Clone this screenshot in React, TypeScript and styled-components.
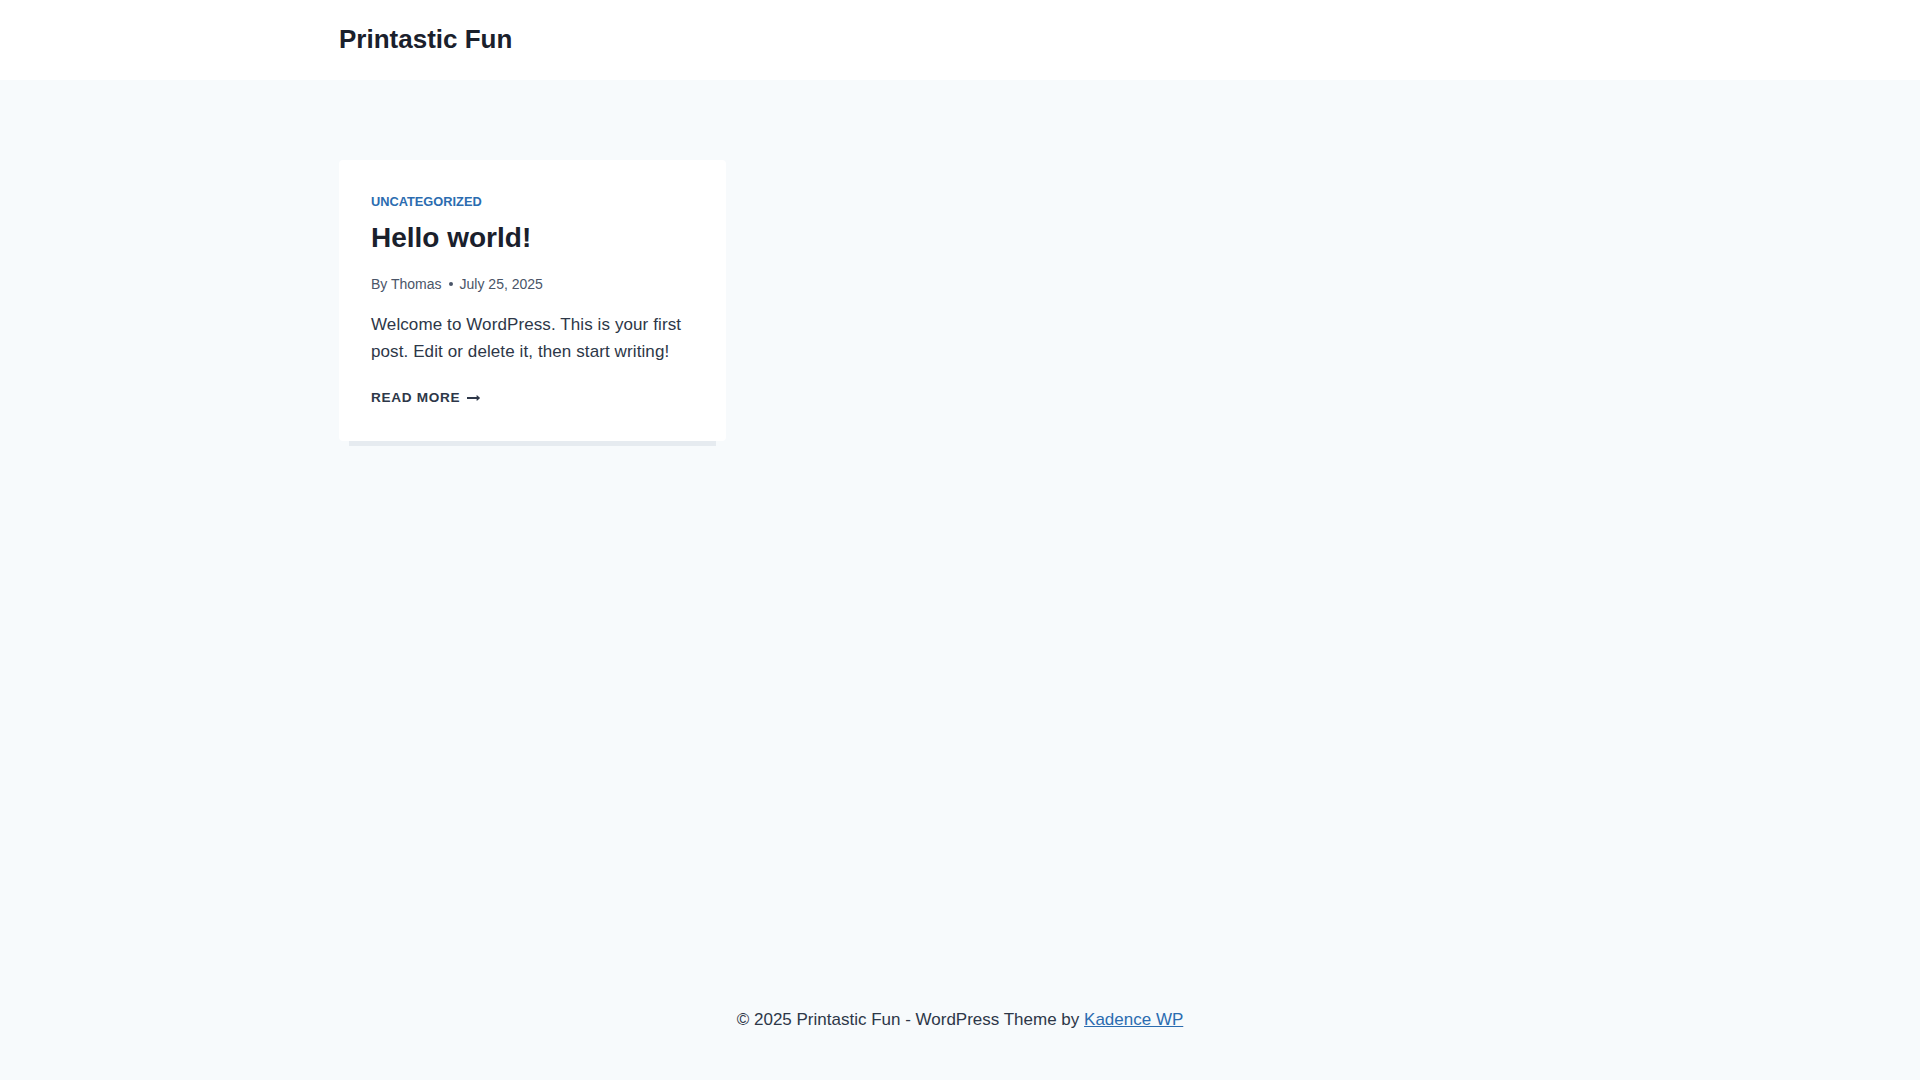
import React, { FC } from "react";
import styled, { createGlobalStyle } from "styled-components";

const GlobalStyle = createGlobalStyle`
  html, body {
    margin: 0;
    padding: 0;
  }
  body {
    background: #f7fafc;
    color: #2d3748;
    font-family: "Liberation Sans", Arial, sans-serif;
    font-size: 17px;
    line-height: 1.6;
  }
  * {
    box-sizing: border-box;
  }
`;

const ArrowIcon: FC = () => (
  <svg width="13" height="14" viewBox="0 0 27 28" fill="currentColor" aria-hidden="true">
    <path d="M27 13.953c0 0.141-0.063 0.281-0.156 0.375l-6 5.531c-0.156 0.141-0.359 0.172-0.547 0.094-0.172-0.078-0.297-0.25-0.297-0.453v-3.5h-19.5c-0.281 0-0.5-0.219-0.5-0.5v-3c0-0.281 0.219-0.5 0.5-0.5h19.5v-3.5c0-0.203 0.109-0.375 0.297-0.453s0.391-0.047 0.547 0.078l6 5.469c0.094 0.094 0.156 0.219 0.156 0.359v0z" />
  </svg>
);

const App: FC = () => {
  return (
    <Page>
      <GlobalStyle />
      <Header>
        <Container>
          <SiteTitle href="#">Printastic Fun</SiteTitle>
        </Container>
      </Header>
      <Main>
        <Container>
          <PostGrid>
            <PostCard>
              <Category href="#">Uncategorized</Category>
              <PostTitle>Hello world!</PostTitle>
              <Meta>
                <span>
                  By <MetaLink href="#">Thomas</MetaLink>
                </span>
                <Bullet />
                <span>July 25, 2025</span>
              </Meta>
              <Excerpt>
                Welcome to WordPress. This is your first post. Edit or delete
                it, then start writing!
              </Excerpt>
              <MoreLink href="#">
                Read More
                <ArrowIcon />
              </MoreLink>
            </PostCard>
          </PostGrid>
        </Container>
      </Main>
      <Footer>
        <Container>
          <FooterText>
            © 2025 Printastic Fun - WordPress Theme by{" "}
            <FooterLink href="#">Kadence WP</FooterLink>
          </FooterText>
        </Container>
      </Footer>
    </Page>
  );
};

const Page = styled.div`
  min-height: 100vh;
  display: flex;
  flex-direction: column;
`;

const Container = styled.div`
  max-width: 1290px;
  margin: 0 auto;
  padding: 0 24px;
`;

const Header = styled.header`
  background: #ffffff;
  height: 80px;
  display: flex;
  align-items: center;

  & > div {
    width: 100%;
  }
`;

const SiteTitle = styled.a`
  font-size: 26px;
  font-weight: 700;
  line-height: 1.2;
  color: #1a202c;
  text-decoration: none;
`;

const Main = styled.main`
  flex: 1;
  padding-top: 80px;
`;

const PostGrid = styled.div`
  display: grid;
  grid-template-columns: repeat(3, 1fr);
  column-gap: 40px;
`;

const PostCard = styled.article`
  display: flex;
  flex-direction: column;
  align-items: flex-start;
  background: #ffffff;
  border-radius: 4px;
  padding: 32px;
  box-shadow: 0 15px 0 -10px #e6ebf0;
`;

const Category = styled.a`
  font-size: 12.8px;
  font-weight: 700;
  line-height: 20px;
  text-transform: uppercase;
  color: #2b6cb0;
  text-decoration: none;
  margin-bottom: 5px;
`;

const PostTitle = styled.h2`
  margin: 0;
  font-size: 28px;
  font-weight: 700;
  line-height: 42px;
  color: #1a202c;
`;

const Meta = styled.div`
  display: flex;
  align-items: center;
  gap: 7px;
  margin-top: 14px;
  font-size: 14px;
  line-height: 22px;
  color: #4a5568;
`;

const MetaLink = styled.a`
  color: #4a5568;
  text-decoration: none;
`;

const Bullet = styled.span`
  width: 4px;
  height: 4px;
  border-radius: 50%;
  background: #4a5568;
`;

const Excerpt = styled.p`
  margin: 16px 0 0;
  font-size: 17px;
  line-height: 27.2px;
  letter-spacing: 0.1px;
  color: #2d3748;
`;

const MoreLink = styled.a`
  display: inline-flex;
  align-items: center;
  gap: 7px;
  margin-top: 22px;
  font-size: 13.6px;
  font-weight: 700;
  line-height: 22px;
  letter-spacing: 0.05em;
  text-transform: uppercase;
  color: #2d3748;
  text-decoration: none;
`;

const Footer = styled.footer`
  padding: 30px 0 47px;
`;

const FooterText = styled.p`
  margin: 0;
  text-align: center;
  font-size: 17px;
  line-height: 27.2px;
  color: #2d3748;
`;

const FooterLink = styled.a`
  color: #2b6cb0;
  text-decoration: underline;
`;

export default App;
